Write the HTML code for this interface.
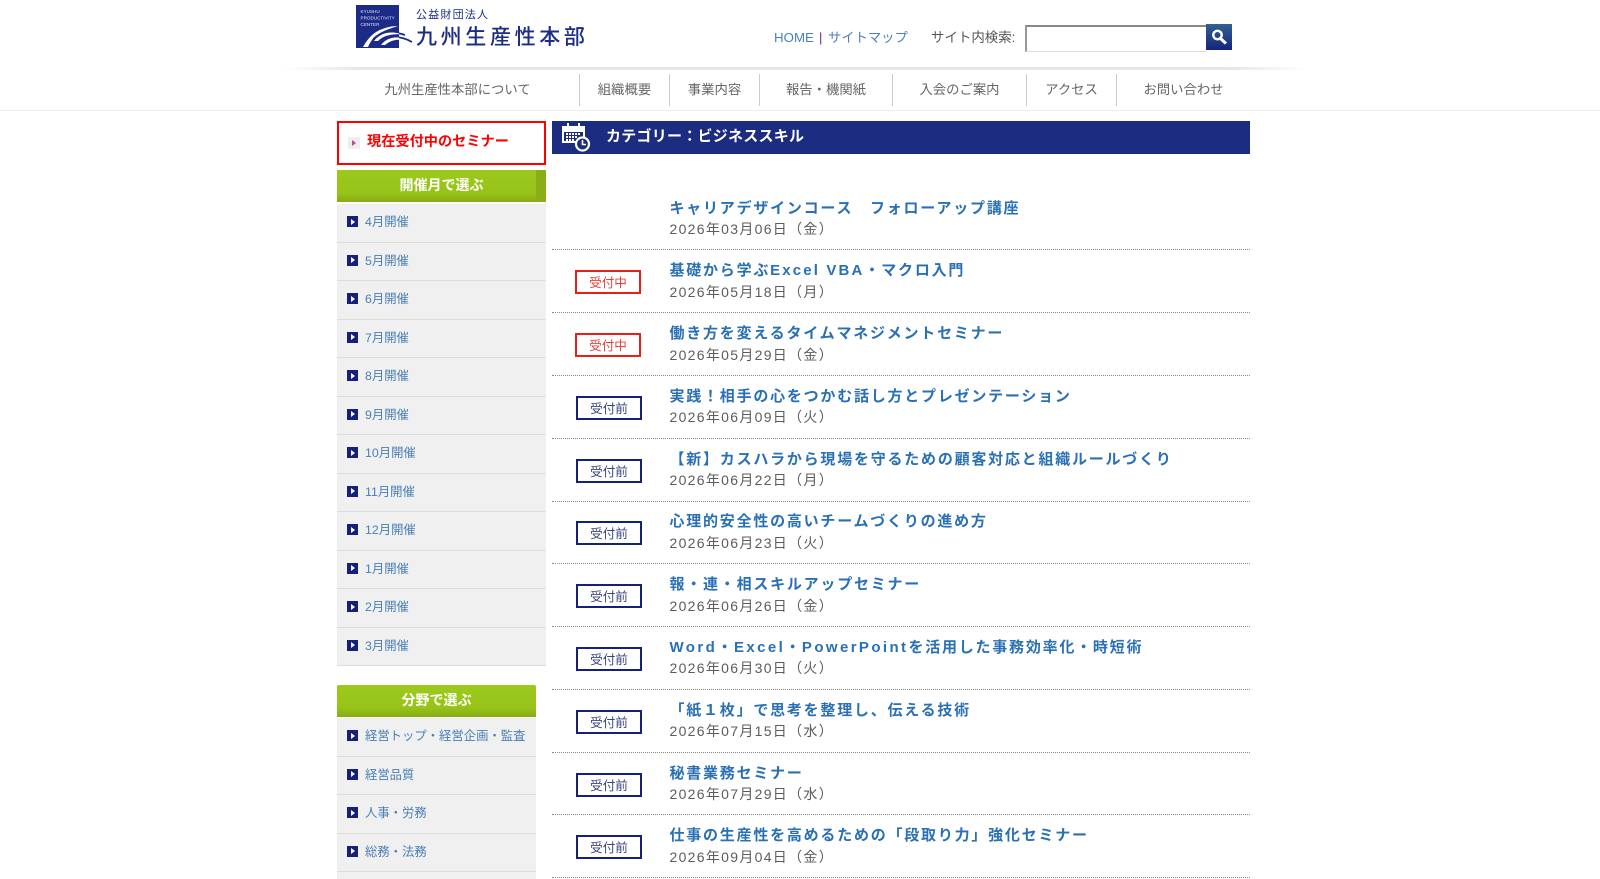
<!DOCTYPE html>
<html lang="ja"><head><meta charset="utf-8"><title>九州生産性本部</title>
<style>
html{margin:0;padding:0;background:#fff;height:879px;overflow:hidden;}
body{margin:0;padding:0;background:#fff;position:relative;width:1600px;height:879px;overflow:hidden;font-family:"Liberation Sans","Noto Sans CJK JP",sans-serif;color:#555;}
#w{position:absolute;left:0;top:0;width:1600px;height:879px;overflow:hidden;}
.a{position:absolute;white-space:nowrap;}
.nav{top:80px;line-height:20px;font-size:13.35px;color:#666;text-align:center;}
.sep{top:74px;width:1px;height:32px;background:#ccc;}
.it{left:337px;width:209px;height:37.5px;background:#f0f0f0;border-bottom:1px solid #ddd;}
.it2{width:199px;}
.ic{position:absolute;left:10px;top:12px;width:11px;height:11px;background:#14207a;}
.ic:after{content:"";position:absolute;left:4px;top:2.5px;border-left:4px solid #fff;border-top:3px solid transparent;border-bottom:3px solid transparent;}
.it b{position:absolute;left:28px;top:8px;line-height:20px;font-weight:normal;font-size:12.35px;color:#4a7fb5;white-space:nowrap;}
.g{left:337px;background:linear-gradient(#9cc91c,#98c41a 70%,#86ab14);color:#fff;font-weight:bold;font-size:14px;text-align:center;}
.t{left:669.5px;font-size:15px;font-weight:bold;letter-spacing:1.77px;color:#2a70b5;line-height:20px;}
.t span{letter-spacing:2.4px;}
.t span.x{letter-spacing:2.15px;}
.d{left:669.5px;font-size:14px;letter-spacing:1.3px;color:#5c5c5c;line-height:20px;}
.l{left:552px;width:698px;height:0;border-top:1px dotted #888;}
.bd{left:576px;width:62px;height:20px;line-height:22px;text-align:center;font-size:12.6px;border:2px solid #14207a;color:#3a4580;}
.r{left:575px;border-color:#e8201c;color:#e8403c;}
</style></head><body><div id="w">

<svg class="a" style="left:356px;top:5px" width="62" height="44" viewBox="0 0 62 44">
<defs><clipPath id="c"><rect width="43" height="43"/></clipPath></defs>
<rect width="43" height="43" fill="#1c2c86"/>
<g fill="none" stroke="#1c2c86" stroke-width="1.8">
<path d="M19 33C24 28 34 25 49 30"/>
<path d="M26 37C32 31 44 30 56 37"/>
</g>
<g clip-path="url(#c)">
<text x="4.5" y="8" font-size="4.6" fill="#dfe3f2" font-family="Liberation Sans">KYUSHU</text>
<text x="4.5" y="14.5" font-size="4.6" fill="#dfe3f2" font-family="Liberation Sans">PRODUCTIVITY</text>
<text x="4.5" y="21" font-size="4.6" fill="#dfe3f2" font-family="Liberation Sans">CENTER</text>
<path d="M7 42C12 33 18 27 26 24C20 29 15 35 12 42Z" fill="#fff"/>
<path d="M14 33C20 26 30 21 42 21C32 24 24 27 17 33Z" fill="#fff"/>
<path d="M18 36C24 28 34 25 49 30C38 28 28 30 22 36Z" fill="#fff"/>
<path d="M25 40C32 31 44 30 56 37C46 33 36 34 29 40Z" fill="#fff"/>
</g>
</svg>
<div class="a" style="left:416px;top:7px;line-height:16px;font-size:11px;letter-spacing:1.2px;color:#1c2c86;">公益財団法人</div>
<div class="a" style="left:416px;top:24px;line-height:28px;font-size:21px;letter-spacing:3.65px;color:#1c2c86;font-weight:500;">九州生産性本部</div>

<div class="a" style="left:774px;top:28px;line-height:20px;font-size:13.3px;color:#4a7fc0;">HOME</div>
<div class="a" style="left:819px;top:28px;line-height:20px;font-size:13px;color:#6a2a6a;">|</div>
<div class="a" style="left:828px;top:28px;line-height:20px;font-size:13.3px;color:#4a7fc0;">サイトマップ</div>
<div class="a" style="left:931px;top:28px;line-height:20px;font-size:13.45px;color:#555;">サイト内検索:</div>
<div class="a" style="left:1025px;top:25px;width:179px;height:24px;border:1px solid #999;border-top:2px solid #888;border-left:2px solid #999;border-right:0;border-bottom-color:#ddd;"></div>
<div class="a" style="left:1206px;top:24px;width:26px;height:26px;background:linear-gradient(#33618f,#14247e);"></div>
<svg class="a" style="left:1206px;top:24px" width="26" height="26" viewBox="0 0 26 26"><circle cx="11.5" cy="11" r="4.2" fill="none" stroke="#fff" stroke-width="2.4"/><path d="M14.5 14.5L20 19.5" stroke="#fff" stroke-width="3"/></svg>

<div class="a" style="left:280px;top:67px;width:1030px;height:3px;background:linear-gradient(90deg,#fff,#e6e6e6 8%,#e6e6e6 92%,#fff);"></div>
<div class="a" style="left:0;top:110px;width:1600px;height:1px;background:#eee;"></div>

<div class="a nav" style="left:337px;width:241px;">九州生産性本部について</div>
<div class="a sep" style="left:579px"></div>
<div class="a nav" style="left:580px;width:89px;">組織概要</div>
<div class="a sep" style="left:669px"></div>
<div class="a nav" style="left:670px;width:89px;">事業内容</div>
<div class="a sep" style="left:759px"></div>
<div class="a nav" style="left:760px;width:132px;">報告・機関紙</div>
<div class="a sep" style="left:892px"></div>
<div class="a nav" style="left:893px;width:133px;">入会のご案内</div>
<div class="a sep" style="left:1026px"></div>
<div class="a nav" style="left:1027px;width:89px;">アクセス</div>
<div class="a sep" style="left:1116px"></div>
<div class="a nav" style="left:1117px;width:133px;">お問い合わせ</div>

<div class="a" style="left:337px;top:121px;width:205px;height:40px;border:2px solid #f00;"></div>
<div class="a" style="left:348px;top:137px;width:12px;height:12px;background:#eee;"></div>
<div class="a" style="left:352px;top:140px;border-left:4px solid #c0479a;border-top:3px solid transparent;border-bottom:3px solid transparent;"></div>
<div class="a" style="left:367px;top:132px;line-height:20px;font-size:14.2px;font-weight:bold;color:#f00;">現在受付中のセミナー</div>

<div class="a g" style="top:170px;width:209px;height:32px;line-height:30px;">開催月で選ぶ</div>
<div class="a" style="left:536px;top:170px;width:10px;height:32px;background:#8aad18;"></div>

<div class="a it" style="top:204px"><i class="ic"></i><b>4月開催</b></div>
<div class="a it" style="top:242.5px"><i class="ic"></i><b>5月開催</b></div>
<div class="a it" style="top:281px"><i class="ic"></i><b>6月開催</b></div>
<div class="a it" style="top:319.5px"><i class="ic"></i><b>7月開催</b></div>
<div class="a it" style="top:358px"><i class="ic"></i><b>8月開催</b></div>
<div class="a it" style="top:396.5px"><i class="ic"></i><b>9月開催</b></div>
<div class="a it" style="top:435px"><i class="ic"></i><b>10月開催</b></div>
<div class="a it" style="top:473.5px"><i class="ic"></i><b>11月開催</b></div>
<div class="a it" style="top:512px"><i class="ic"></i><b>12月開催</b></div>
<div class="a it" style="top:550.5px"><i class="ic"></i><b>1月開催</b></div>
<div class="a it" style="top:589px"><i class="ic"></i><b>2月開催</b></div>
<div class="a it" style="top:627.5px"><i class="ic"></i><b>3月開催</b></div>

<div class="a g" style="top:685px;width:199px;height:32px;line-height:30px;border-radius:2px 2px 0 0;">分野で選ぶ</div>
<div class="a it it2" style="top:718px"><i class="ic"></i><b>経営トップ・経営企画・監査</b></div>
<div class="a it it2" style="top:756.5px"><i class="ic"></i><b>経営品質</b></div>
<div class="a it it2" style="top:795px"><i class="ic"></i><b>人事・労務</b></div>
<div class="a it it2" style="top:833.5px"><i class="ic"></i><b>総務・法務</b></div>
<div class="a it it2" style="top:872px"></div>

<div class="a" style="left:552px;top:121px;width:698px;height:33px;background:#1c2c80;"></div>
<svg class="a" style="left:560px;top:122px" width="32" height="32" viewBox="0 0 32 32" fill="none">
<path d="M3 5H24V20H3Z" stroke="#fff" stroke-width="2"/><path d="M3 5H24V10H3Z" fill="#fff"/>
<path d="M8 1V6M19 1V6" stroke="#fff" stroke-width="2"/>
<path d="M6 12H20M6 15H17M6 18H15" stroke="#fff" stroke-width="2" stroke-dasharray="2 1"/>
<circle cx="22.5" cy="22" r="6.5" fill="#1c2c80" stroke="#fff" stroke-width="2.2"/>
<path d="M22.5 18V22.5H26" stroke="#fff" stroke-width="1.6"/>
</svg>
<div class="a" style="left:606px;top:126px;line-height:22px;font-size:15px;letter-spacing:.25px;font-weight:bold;color:#fff;">カテゴリー：ビジネススキル</div>

<div class="a t" style="top:198.5px">キャリアデザインコース　フォローアップ講座</div>
<div class="a d" style="top:219px">2026年03月06日（金）</div>
<div class="a l" style="top:249px"></div>

<div class="a bd r" style="top:270px">受付中</div>
<div class="a t" style="top:260.5px">基礎から学ぶ<span class="x">Excel VBA</span>・マクロ入門</div>
<div class="a d" style="top:282px">2026年05月18日（月）</div>
<div class="a l" style="top:312px"></div>

<div class="a bd r" style="top:333px">受付中</div>
<div class="a t" style="top:324px">働き方を変えるタイムマネジメントセミナー</div>
<div class="a d" style="top:345px">2026年05月29日（金）</div>
<div class="a l" style="top:375px"></div>

<div class="a bd" style="top:396px">受付前</div>
<div class="a t" style="top:386.5px">実践！相手の心をつかむ話し方とプレゼンテーション</div>
<div class="a d" style="top:407px">2026年06月09日（火）</div>
<div class="a l" style="top:438px"></div>

<div class="a bd" style="top:459px">受付前</div>
<div class="a t" style="top:449.5px">【新】カスハラから現場を守るための顧客対応と組織ルールづくり</div>
<div class="a d" style="top:470px">2026年06月22日（月）</div>
<div class="a l" style="top:500.5px"></div>

<div class="a bd" style="top:521px">受付前</div>
<div class="a t" style="top:512px">心理的安全性の高いチームづくりの進め方</div>
<div class="a d" style="top:533px">2026年06月23日（火）</div>
<div class="a l" style="top:563px"></div>

<div class="a bd" style="top:584px">受付前</div>
<div class="a t" style="top:575px">報・連・相スキルアップセミナー</div>
<div class="a d" style="top:596px">2026年06月26日（金）</div>
<div class="a l" style="top:626px"></div>

<div class="a bd" style="top:647px">受付前</div>
<div class="a t" style="top:637.5px"><span>Word</span>・<span>Excel</span>・<span>PowerPoint</span>を活用した事務効率化・時短術</div>
<div class="a d" style="top:658px">2026年06月30日（火）</div>
<div class="a l" style="top:689px"></div>

<div class="a bd" style="top:710px">受付前</div>
<div class="a t" style="top:700.5px">「紙１枚」で思考を整理し、伝える技術</div>
<div class="a d" style="top:721px">2026年07月15日（水）</div>
<div class="a l" style="top:752px"></div>

<div class="a bd" style="top:773px">受付前</div>
<div class="a t" style="top:763.5px">秘書業務セミナー</div>
<div class="a d" style="top:784px">2026年07月29日（水）</div>
<div class="a l" style="top:814px"></div>

<div class="a bd" style="top:835px">受付前</div>
<div class="a t" style="top:825.5px">仕事の生産性を高めるための「段取り力」強化セミナー</div>
<div class="a d" style="top:847px">2026年09月04日（金）</div>
<div class="a l" style="top:877px"></div>

</div></body></html>
